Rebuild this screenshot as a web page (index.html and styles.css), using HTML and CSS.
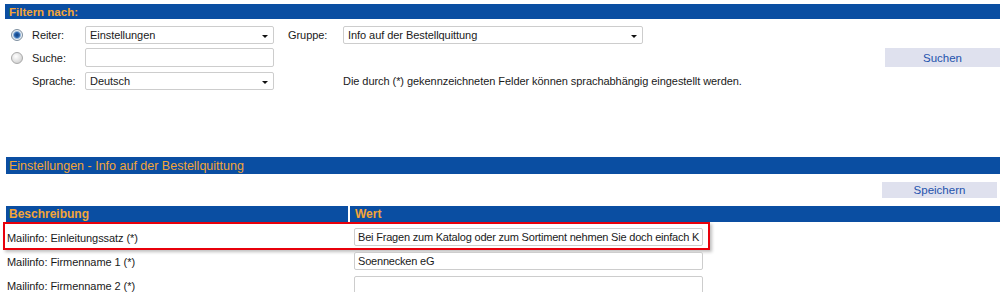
FILE: index.html
```html
<!DOCTYPE html>
<html lang="de">
<head>
    <meta charset="UTF-8">
    <title>Einstellungen</title>
    <link rel="stylesheet" href="styles.css">
</head>
<body>
<div class="page">
    <div class="bar bar-filter">Filtern nach:</div>

    <div class="filter">
        <div class="frow">
            <span class="radio checked"></span>
            <span class="flabel">Reiter:</span>
            <div class="select field-a">Einstellungen<i class="arrow"></i></div>
            <span class="flabel glabel">Gruppe:</span>
            <div class="select field-b">Info auf der Bestellquittung<i class="arrow"></i></div>
        </div>
        <div class="frow">
            <span class="radio"></span>
            <span class="flabel">Suche:</span>
            <div class="text field-a tall"></div>
            <div class="spacer"></div>
            <div class="btn btn-search">Suchen</div>
        </div>
        <div class="frow">
            <span class="radio none"></span>
            <span class="flabel">Sprache:</span>
            <div class="select field-a">Deutsch<i class="arrow"></i></div>
            <span class="note">Die durch (*) gekennzeichneten Felder können sprachabhängig eingestellt werden.</span>
        </div>
    </div>

    <div class="settings">
        <div class="bar bar-section">Einstellungen - Info auf der Bestellquittung</div>

        <div class="actions">
            <div class="btn btn-save">Speichern</div>
        </div>

        <div class="thead">
            <div class="th th-desc">Beschreibung</div>
            <div class="th th-val">Wert</div>
        </div>

        <div class="tbody">
            <div class="trow marked">
                <div class="td-desc">Mailinfo: Einleitungssatz (*)</div>
                <div class="text value">Bei Fragen zum Katalog oder zum Sortiment nehmen Sie doch einfach K</div>
                <div class="mark"></div>
            </div>
            <div class="trow">
                <div class="td-desc">Mailinfo: Firmenname 1 (*)</div>
                <div class="text value">Soennecken eG</div>
            </div>
            <div class="trow">
                <div class="td-desc">Mailinfo: Firmenname 2 (*)</div>
                <div class="text value"></div>
            </div>
        </div>
    </div>
</div>
</body>
</html>
```

FILE: styles.css
```css
body {
    margin: 0;
    background: #fff;
    font-family: "Liberation Sans", Arial, sans-serif;
    font-size: 11px;
    letter-spacing: -0.06px;
    color: #1a1a1a;
}

* {
    box-sizing: border-box;
}

.page {
    width: 1000px;
    padding: 4px 0 0 5px;
    overflow: hidden;
    height: 292px;
}

.bar {
    background: #0a4ea2;
    color: #f4a537;
    display: flex;
    align-items: center;
    padding-left: 4px;
}

.bar-filter {
    height: 15px;
    font-weight: bold;
    font-size: 11.5px;
    letter-spacing: 0;
}

.filter {
    margin-top: 4px;
}

.frow {
    height: 23px;
    display: flex;
    align-items: center;
}

.radio {
    width: 12px;
    height: 12px;
    margin: 0 9px 0 6px;
    border-radius: 50%;
    border: 1px solid #a9a9a9;
    background: radial-gradient(circle at 40% 35%, #ffffff 0%, #e6e6e6 45%, #c4c4c4 100%);
}

.radio.checked {
    border-color: #7d8fa0;
    background: radial-gradient(circle, #123f7a 0, #2a66b0 2.5px, #8fb3d8 3.5px, #eef2f6 4.5px, #c8cfd8 100%);
}

.radio.none {
    visibility: hidden;
}

.flabel {
    width: 53px;
}

.glabel {
    width: 55px;
    margin-left: 14px;
}

.select,
.text {
    position: relative;
    height: 18px;
    border: 1px solid #cdcdcd;
    border-radius: 2px;
    padding-left: 4px;
    display: flex;
    align-items: center;
    background: #fff;
    white-space: nowrap;
    overflow: hidden;
}

.text.tall {
    height: 19px;
}

.field-a {
    width: 189px;
}

.field-b {
    width: 300px;
}

.arrow {
    position: absolute;
    right: 5px;
    top: 8px;
    width: 0;
    height: 0;
    border-left: 3px solid transparent;
    border-right: 3px solid transparent;
    border-top: 3px solid #111;
}

.spacer {
    flex: 1;
}

.btn {
    background: #dfe1ee;
    color: #2453ad;
    display: flex;
    align-items: center;
    justify-content: center;
    font-size: 11.5px;
    letter-spacing: 0;
}

.btn-search {
    width: 115px;
    height: 19px;
}

.note {
    margin-left: 69px;
}

.settings {
    margin: 65px 0 0 1px;
}

.bar-section {
    height: 17px;
    font-size: 12.5px;
    letter-spacing: 0;
    padding-left: 3px;
}

.actions {
    display: flex;
    justify-content: flex-end;
    padding: 8px 3px 8px 0;
}

.btn-save {
    width: 115px;
    height: 16px;
}

.thead {
    display: flex;
    gap: 2px;
    height: 16px;
}

.th {
    background: #0a4ea2;
    color: #f4a537;
    font-weight: bold;
    font-size: 12px;
    letter-spacing: 0;
    display: flex;
    align-items: center;
    padding-left: 3px;
}

.th-desc {
    width: 342px;
}

.th-val {
    flex: 1;
    padding-left: 5px;
}

.tbody {
    padding-top: 3px;
}

.trow {
    position: relative;
    height: 24px;
    display: flex;
    align-items: center;
}

.td-desc {
    width: 348px;
    padding-left: 1px;
    padding-top: 1px;
}

.value {
    width: 349px;
    padding-left: 3px;
    letter-spacing: -0.2px;
}

.mark {
    position: absolute;
    left: -3px;
    top: -3px;
    width: 707px;
    height: 28px;
    border: 2px solid #e8000b;
    box-shadow: 2px 2px 3px rgba(0, 0, 0, 0.25);
}
```
